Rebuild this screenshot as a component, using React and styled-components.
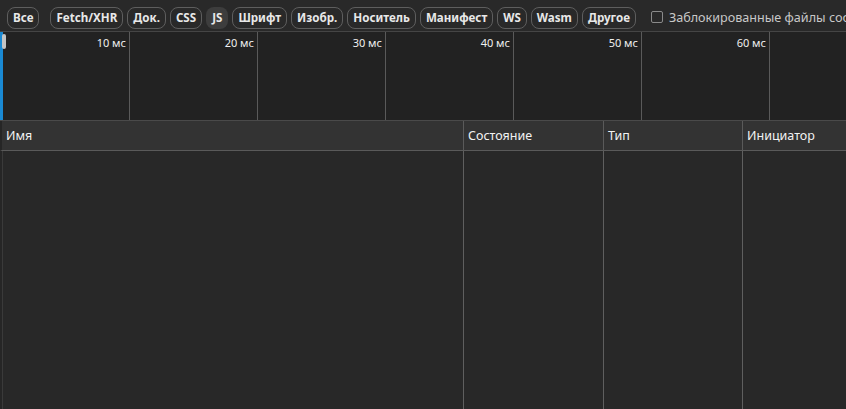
import React from 'react';
import styled, { createGlobalStyle } from 'styled-components';

const GlobalStyle = createGlobalStyle`
  html, body {
    margin: 0;
    padding: 0;
    background: #282828;
    font-family: "Noto Sans", "Open Sans", Arial, sans-serif;
    color: #e3e3e3;
    overflow: hidden;
  }
`;

const Page = styled.div`
  width: 846px;
  height: 409px;
  display: flex;
  flex-direction: column;
  overflow: hidden;
`;

const Toolbar = styled.div`
  height: 31px;
  flex: none;
  display: flex;
  align-items: center;
  padding: 0 0 0 7px;
  gap: 4px;
  background: #292929;
  border-bottom: 1px solid #454545;
  white-space: nowrap;
  overflow: hidden;
`;

const Chip = styled.button`
  height: 22px;
  padding: 0 5px;
  border-radius: 8px;
  border: 1px solid ${({ $active }) => ($active ? 'transparent' : '#5e5e5e')};
  background: ${({ $active }) => ($active ? '#3d3d3d' : 'transparent')};
  color: #e8e8e8;
  font-family: inherit;
  font-size: 11.6px;
  font-weight: 700;
  line-height: 20px;
  margin-top: 4px;
  margin-right: ${({ $gapAfter }) => ($gapAfter ? '7px' : '0')};
  flex: none;
`;

const CheckLabel = styled.label`
  display: flex;
  align-items: center;
  gap: 6px;
  margin-left: 11px;
  margin-top: 3px;
  font-size: 12.6px;
  color: #c8c8c8;
  flex: none;
`;

const Box = styled.span`
  width: 10px;
  height: 10px;
  border: 1px solid #8a8a8a;
  border-radius: 2px;
`;

const Timeline = styled.div`
  height: 88px;
  flex: none;
  display: grid;
  grid-template-columns: repeat(7, 128px);
  background: #222222;
  border-bottom: 1px solid #4a4a4a;
  position: relative;
  padding-left: 2px;
`;

const Tick = styled.div`
  border-right: 1px solid #5a5a5a;
  font-size: 11px;
  color: #f0f0f0;
  text-align: right;
  padding: 3px 3px 0 0;
`;

const Overview = styled.div`
  position: absolute;
  left: 0;
  top: 0;
  bottom: 0;
  width: 3px;
  background: #1a8ad4;
`;

const Handle = styled.div`
  position: absolute;
  left: 2px;
  top: 2px;
  width: 4px;
  height: 15px;
  border-radius: 2px;
  background: #c4c4c4;
`;

const cols = '461px 140px 139px 1fr';

const HeaderRow = styled.div`
  height: 29px;
  flex: none;
  display: grid;
  grid-template-columns: ${cols};
  background: #333333;
  border-bottom: 1px solid #5a5a5a;
  border-left: 2px solid #262626;
`;

const HeadCell = styled.div`
  font-size: 12.5px;
  color: #f2f2f2;
  padding: 0 4px;
  line-height: 29px;
  border-left: ${({ $first }) => ($first ? 'none' : '1px solid #5a5a5a')};
`;

const Body = styled.div`
  flex: 1;
  display: grid;
  grid-template-columns: ${cols};
  background: #282828;
  border-left: 2px solid #262626;
`;

const BodyCell = styled.div`
  border-left: ${({ $first }) => ($first ? '1px solid #3a3a3a' : '1px solid #5f5f5f')};
`;

const filters = ['Все', 'Fetch/XHR', 'Док.', 'CSS', 'JS', 'Шрифт', 'Изобр.', 'Носитель', 'Манифест', 'WS', 'Wasm', 'Другое'];
const ticks = ['10 мс', '20 мс', '30 мс', '40 мс', '50 мс', '60 мс', ''];
const columns = ['Имя', 'Состояние', 'Тип', 'Инициатор'];

export default function App() {
  return (
    <>
      <GlobalStyle />
      <Page>
        <Toolbar>
          {filters.map((f, i) => (
            <Chip key={f} $active={f === 'JS'} $gapAfter={i === 0}>{f}</Chip>
          ))}
          <CheckLabel>
            <Box />
            Заблокированные файлы cookie
          </CheckLabel>
        </Toolbar>
        <Timeline>
          {ticks.map((t, i) => (
            <Tick key={i}>{t}</Tick>
          ))}
          <Overview />
          <Handle />
        </Timeline>
        <HeaderRow>
          {columns.map((c, i) => (
            <HeadCell key={c} $first={i === 0}>{c}</HeadCell>
          ))}
        </HeaderRow>
        <Body>
          {columns.map((c, i) => (
            <BodyCell key={c} $first={i === 0} />
          ))}
        </Body>
      </Page>
    </>
  );
}
